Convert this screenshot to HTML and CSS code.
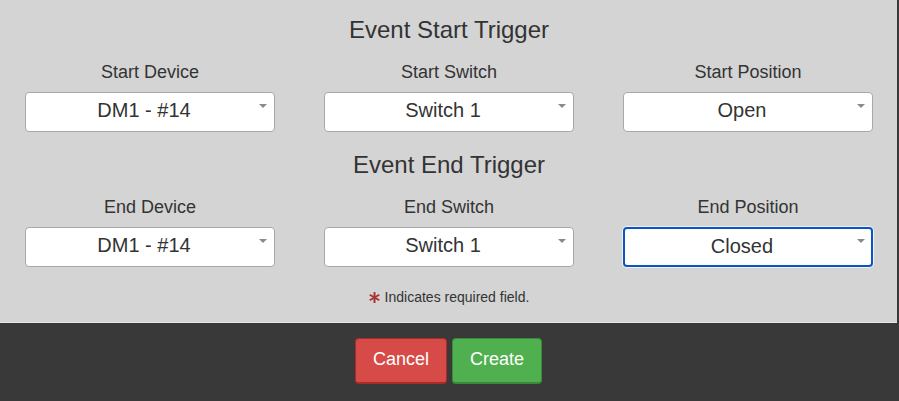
FILE: index.html
```html
<!DOCTYPE html>
<html>
<head>
<meta charset="utf-8">
<link rel="stylesheet" href="styles.css">
</head>
<body>
<div class="page">
  <div class="content">
    <h2 class="section-title">Event Start Trigger</h2>
    <div class="fields">
      <div class="field">
        <label class="field-label">Start Device</label>
        <div class="select"><span>DM1 - #14</span><i class="caret"></i></div>
      </div>
      <div class="field">
        <label class="field-label">Start Switch</label>
        <div class="select"><span>Switch 1</span><i class="caret"></i></div>
      </div>
      <div class="field">
        <label class="field-label">Start Position</label>
        <div class="select"><span>Open</span><i class="caret"></i></div>
      </div>
    </div>
    <h2 class="section-title second">Event End Trigger</h2>
    <div class="fields">
      <div class="field">
        <label class="field-label">End Device</label>
        <div class="select"><span>DM1 - #14</span><i class="caret"></i></div>
      </div>
      <div class="field">
        <label class="field-label">End Switch</label>
        <div class="select"><span>Switch 1</span><i class="caret"></i></div>
      </div>
      <div class="field">
        <label class="field-label">End Position</label>
        <div class="select focused"><span>Closed</span><i class="caret"></i></div>
      </div>
    </div>
    <p class="required-note">
      <svg class="req-star" width="11" height="11" viewBox="0 0 12 12" aria-hidden="true">
        <g stroke="#ad3232" stroke-width="2.2" stroke-linecap="butt">
          <line x1="6" y1="0" x2="6" y2="12"/>
          <line x1="0.8" y1="3" x2="11.2" y2="9"/>
          <line x1="0.8" y1="9" x2="11.2" y2="3"/>
        </g>
      </svg>
      <span>Indicates required field.</span>
    </p>
  </div>
  <div class="footer">
    <button class="btn btn-cancel">Cancel</button>
    <button class="btn btn-create">Create</button>
  </div>
</div>
</body>
</html>
```

FILE: styles.css
```css
html, body {
  margin: 0;
  padding: 0;
  height: 100%;
}
body {
  font-family: "Liberation Sans", Arial, Helvetica, sans-serif;
  color: #333;
  background: #393939;
}
.page {
  width: 897px;
  height: 401px;
  border-right: 2px solid #393939;
  display: flex;
  flex-direction: column;
}
.content {
  background: #d4d4d4;
  padding: 14px 24px 0 25px;
  box-sizing: border-box;
  border-bottom: 1px solid #e6e6e6;
  flex: none;
  height: 323px;
}
.section-title {
  margin: 0;
  font-size: 24px;
  line-height: 32px;
  font-weight: normal;
  text-align: center;
  color: #333;
}
.section-title.second {
  margin-top: 17px;
}
.fields {
  display: grid;
  grid-template-columns: 250px 250px 250px;
  column-gap: 49px;
  margin-top: 16px;
}
.field {
  display: flex;
  flex-direction: column;
  align-items: stretch;
}
.field-label {
  font-size: 18px;
  line-height: 20px;
  text-align: center;
  margin-bottom: 10px;
  color: #333;
}
.select {
  position: relative;
  height: 40px;
  box-sizing: border-box;
  background: #fff;
  border: 1px solid #a8a8a8;
  border-radius: 4px;
  display: flex;
  align-items: center;
  justify-content: center;
  padding: 0 20px 3px 8px;
  font-size: 20px;
  color: #333;
}
.select.focused {
  border: 2px solid #0b53c6;
  box-shadow: 0 0 0 1px rgba(255, 255, 255, 0.7);
  padding: 0 19px 2px 7px;
}
.caret {
  position: absolute;
  right: 7px;
  top: 11px;
  width: 0;
  height: 0;
  border-left: 4px solid transparent;
  border-right: 4px solid transparent;
  border-top: 4px solid #8a8a8a;
}
.select.focused .caret {
  right: 6px;
  top: 10px;
}
.required-note {
  margin: 22px 0 0;
  display: flex;
  align-items: center;
  justify-content: center;
  gap: 5px;
  font-size: 14px;
  line-height: 16px;
  color: #333;
}
.req-star {
  display: block;
  width: 11px;
  height: 11px;
}
.footer {
  flex: 1;
  background: #393939;
  display: flex;
  justify-content: center;
  align-items: flex-start;
  gap: 5px;
  padding-top: 15px;
}
.btn {
  height: 46px;
  padding: 0 17px 2px;
  border-radius: 4px;
  font-family: "Liberation Sans", Arial, Helvetica, sans-serif;
  font-size: 18px;
  color: #fff;
  cursor: pointer;
}
.btn-cancel {
  background: #d64b48;
  border: 1px solid #a92a27;
  border-bottom-width: 2px;
}
.btn-create {
  background: #50b050;
  border: 1px solid #3a8a3a;
  border-bottom-width: 2px;
}
```
